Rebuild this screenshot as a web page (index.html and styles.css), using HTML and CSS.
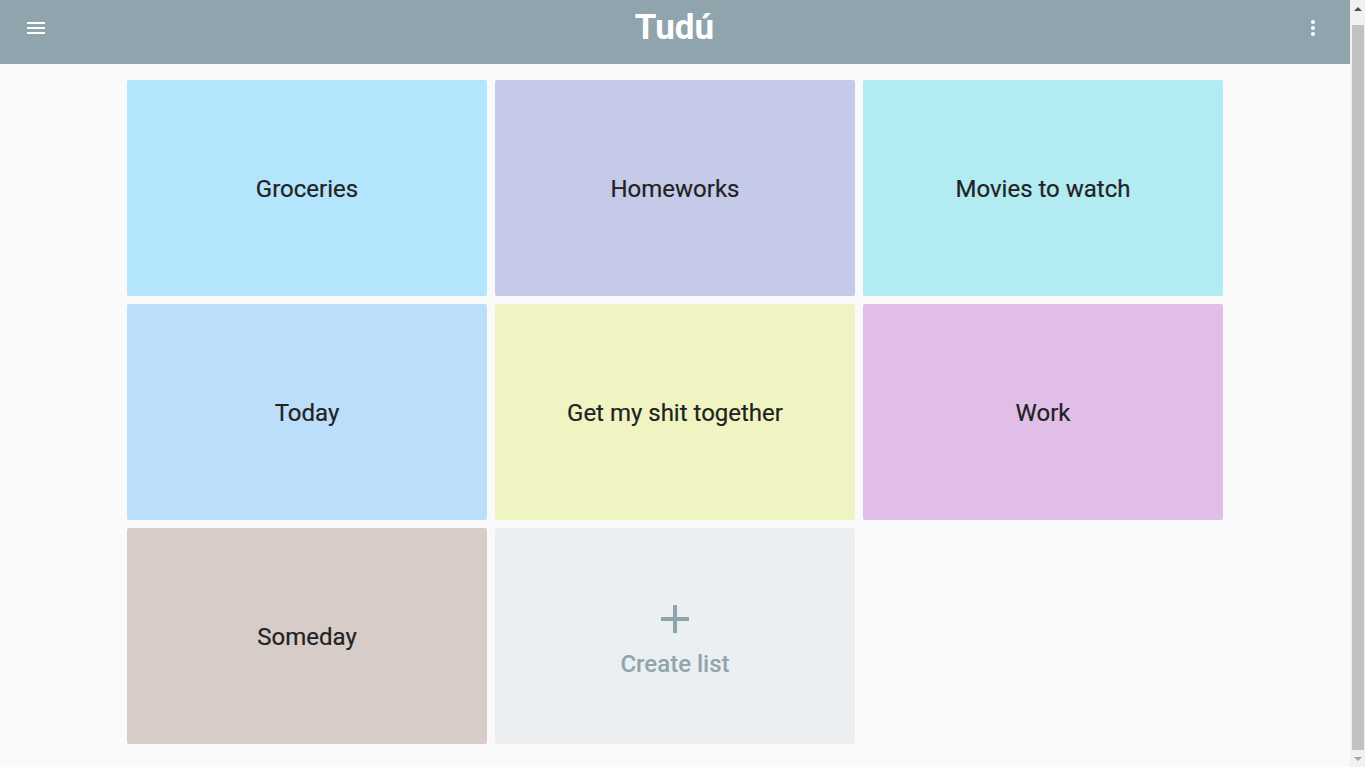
FILE: index.html
```html
<!DOCTYPE html>
<html lang="en">
<head>
<meta charset="utf-8">
<title>Tudú</title>
<link rel="stylesheet" href="styles.css">
</head>
<body>
<div class="app">
  <header class="appbar">
    <button class="icon-btn" aria-label="Menu">
      <svg width="24" height="24" viewBox="0 0 24 24"><path fill="#fff" d="M3 18h18v-2H3v2zm0-5h18v-2H3v2zm0-7v2h18V6H3z"/></svg>
    </button>
    <h1 class="title">Tudú</h1>
    <button class="icon-btn" aria-label="More">
      <svg width="24" height="24" viewBox="0 0 24 24"><path fill="#fff" d="M12 8c1.1 0 2-.9 2-2s-.9-2-2-2-2 .9-2 2 .9 2 2 2zm0 2c-1.1 0-2 .9-2 2s.9 2 2 2 2-.9 2-2-.9-2-2-2zm0 6c-1.1 0-2 .9-2 2s.9 2 2 2 2-.9 2-2-.9-2-2-2z"/></svg>
    </button>
  </header>
  <main class="content">
    <div class="grid">
      <div class="card c-lightblue">Groceries</div>
      <div class="card c-indigo">Homeworks</div>
      <div class="card c-cyan">Movies to watch</div>
      <div class="card c-blue">Today</div>
      <div class="card c-lime">Get my shit together</div>
      <div class="card c-purple">Work</div>
      <div class="card c-brown">Someday</div>
      <div class="card create">
        <svg class="plus" width="48" height="48" viewBox="0 0 24 24"><path fill="#90A4AE" d="M19 13h-6v6h-2v-6H5v-2h6V5h2v6h6v2z"/></svg>
        <span class="create-label">Create list</span>
      </div>
    </div>
  </main>
</div>
<div class="scrollbar" aria-hidden="true">
  <div class="sb-arrow sb-up"></div>
  <div class="sb-track"><div class="sb-thumb"></div></div>
  <div class="sb-arrow sb-down"></div>
</div>
</body>
</html>
```
FILE: styles.css
```css
html, body {
  margin: 0;
  padding: 0;
}
body {
  background: #fafafa;
  font-family: Roboto, "Liberation Sans", Arial, sans-serif;
  color: #212121;
}
.app {
  width: calc(100% - 15px);
}
.appbar {
  height: 64px;
  box-sizing: border-box;
  background: #90a4ae;
  display: flex;
  align-items: center;
  justify-content: space-between;
  padding: 0 25px 8px 24px;
}
.icon-btn {
  background: none;
  border: 0;
  padding: 0;
  width: 24px;
  height: 24px;
  display: flex;
}
.title {
  margin: 0 0 1px;
  color: #fff;
  font-size: 35px;
  font-weight: 700;
  line-height: 40px;
}
.content {
  padding: 16px 0 24px;
}
.grid {
  display: grid;
  grid-template-columns: repeat(3, 360px);
  grid-auto-rows: 216px;
  gap: 8px;
  justify-content: center;
}
.card {
  box-sizing: border-box;
  padding-top: 2px;
  border-radius: 2px;
  display: flex;
  flex-direction: column;
  align-items: center;
  justify-content: center;
  font-size: 24px;
  font-weight: 400;
  color: #222;
  -webkit-text-stroke: 0.2px #222;
}
.c-lightblue { background: #b3e5fc; }
.c-indigo { background: #c5cae9; }
.c-cyan { background: #b2ebf2; }
.c-blue { background: #bbdefb; }
.c-lime { background: #f0f4c3; }
.c-purple { background: #e1bee7; }
.c-brown { background: #d7ccc8; }
.create {
  background: #eceff1;
  color: #90a4ae;
  font-weight: 500;
  padding-top: 0;
  -webkit-text-stroke: 0;
}
.plus {
  display: block;
  margin-bottom: 5px;
}
.create-label {
  line-height: 28px;
  padding-top: 2px;
}
.scrollbar {
  position: fixed;
  top: 0;
  right: 0;
  width: 15px;
  height: 100%;
  background: #f1f1f1;
  display: flex;
  flex-direction: column;
}
.sb-arrow {
  height: 17px;
  flex: none;
  display: flex;
  align-items: center;
  justify-content: center;
}
.sb-up::before,
.sb-down::before {
  content: "";
  width: 0;
  height: 0;
  border-left: 4px solid transparent;
  border-right: 4px solid transparent;
}
.sb-up::before {
  border-bottom: 4px solid #505050;
}
.sb-down::before {
  border-top: 4px solid #a3a3a3;
}
.sb-track {
  flex: 1;
  padding: 8px 1px 0 2px;
}
.sb-thumb {
  height: 100%;
  background: #c1c1c1;
}
```
